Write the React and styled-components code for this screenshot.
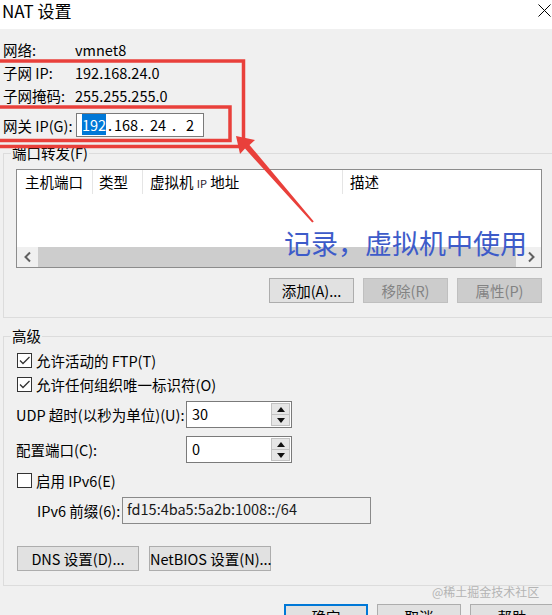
import React from 'react';
import styled, { createGlobalStyle } from 'styled-components';

const GlobalStyle = createGlobalStyle`
  html, body {
    margin: 0;
    padding: 0;
    overflow: hidden;
    background: #f0f0f0;
  }
  body {
    font-family: "Noto Sans CJK SC", "Noto Sans", sans-serif;
    font-size: 14.5px;
    color: #000;
    white-space: nowrap;
  }
`;

const Window = styled.div`
  position: relative;
  width: 552px;
  height: 615px;
  overflow: hidden;
  background: #f0f0f0;
`;

const TitleBar = styled.div`
  display: flex;
  align-items: flex-start;
  height: 29px;
  padding: 2px 1px 0 2px;
  box-sizing: border-box;
  background: #fff;
`;

const Title = styled.div`
  font-size: 17px;
  line-height: 18px;
`;

const CloseIcon = styled.svg`
  margin: 2px 0 0 auto;
`;

const Body = styled.div`
  width: 556px;
  padding: 9px 0 0 3px;
  box-sizing: border-box;
`;

const InfoRow = styled.div`
  display: flex;
  align-items: center;
  height: ${(p) => p.$h || 23}px;
  margin-top: ${(p) => p.$mt || 0}px;
`;

const InfoLabel = styled.div`
  width: 72px;
  flex-shrink: 0;
`;

const IpBox = styled.div`
  display: flex;
  align-items: center;
  width: 128px;
  height: 24px;
  margin-left: 1px;
  padding-left: 4px;
  box-sizing: border-box;
  border: 1px solid #7a7a7a;
  background: #fff;
  line-height: 16px;
`;

const IpField = styled.div`
  width: 26px;
  text-align: center;
`;

const IpText = styled.span`
  background: ${(p) => (p.$selected ? '#0078d7' : 'transparent')};
  color: ${(p) => (p.$selected ? '#fff' : '#000')};
`;

const IpDot = styled.div`
  width: 6px;
  text-align: center;
`;

const Group = styled.fieldset`
  width: 552px;
  min-width: 0;
  margin: ${(p) => p.$mt}px 0 0 0;
  padding: ${(p) => p.$pt}px 12px 14px 12px;
  box-sizing: border-box;
  border: 1px solid #dcdcdc;
`;

const Legend = styled.legend`
  margin-left: -5px;
  padding: 0 1px;
  line-height: 18px;
`;

const ListView = styled.div`
  display: flex;
  flex-direction: column;
  height: 99px;
  box-sizing: border-box;
  border: 1px solid #8c8c8c;
  background: #fff;
`;

const ListHeader = styled.div`
  display: flex;
  height: 24px;
`;

const HeaderCell = styled.div`
  width: ${(p) => (p.$w ? `${p.$w}px` : 'auto')};
  flex: ${(p) => (p.$w ? 'none' : 1)};
  box-sizing: border-box;
  padding-left: ${(p) => p.$pl || 7}px;
  line-height: 24px;
  border-right: ${(p) => (p.$w ? '1px solid #e5e5e5' : 'none')};
`;

const SmallLatin = styled.span`
  font-size: 11px;
  color: #2a1a30;
`;

const ListFill = styled.div`
  flex: 1;
`;

const HScroll = styled.div`
  display: flex;
  height: 20px;
  background: #f0f0f0;
`;

const ScrollArrow = styled.div`
  display: flex;
  align-items: center;
  justify-content: center;
  width: 21px;
`;

const ScrollThumb = styled.div`
  width: 478px;
  background: #cdcdcd;
`;

const ScrollTrack = styled.div`
  flex: 1;
`;

const ButtonRow = styled.div`
  display: flex;
  justify-content: ${(p) => (p.$end ? 'flex-end' : 'flex-start')};
  gap: ${(p) => p.$gap || 9}px;
  margin-top: ${(p) => p.$mt || 0}px;
  padding: 0 ${(p) => p.$pr || 0}px 0 ${(p) => p.$pl || 0}px;
`;

const Button = styled.button`
  width: ${(p) => p.$w}px;
  height: 25px;
  flex-shrink: 0;
  padding: 0;
  font-family: inherit;
  font-size: 14.5px;
  line-height: 18px;
  white-space: nowrap;
  color: #000;
  background: #e1e1e1;
  border: 1px solid ${(p) => (p.$primary ? '#0078d7' : '#adadad')};
  box-shadow: ${(p) => (p.$primary ? 'inset 0 0 0 1px #0078d7' : 'none')};

  &:disabled {
    color: #838383;
    background: #cccccc;
    border-color: #bfbfbf;
  }
`;

const CheckRow = styled.label`
  display: flex;
  align-items: center;
  height: 24px;
  margin-top: ${(p) => p.$mt || 0}px;
  padding-left: 1px;
`;

const CheckBox = styled.span`
  display: flex;
  align-items: center;
  justify-content: center;
  width: 15px;
  height: 15px;
  margin-right: 4px;
  box-sizing: border-box;
  border: 1px solid #333;
  background: #fff;
`;

const SpinRow = styled.div`
  display: flex;
  align-items: center;
  margin-top: ${(p) => p.$mt || 0}px;
`;

const FieldLabel = styled.div`
  width: ${(p) => p.$w}px;
  flex-shrink: 0;
`;

const SpinBox = styled.div`
  display: flex;
  width: 106px;
  height: 27px;
  box-sizing: border-box;
  border: 1px solid #7a7a7a;
  background: #fff;
`;

const SpinValue = styled.div`
  flex: 1;
  padding: 3px 0 0 5px;
  line-height: 18px;
`;

const SpinButtons = styled.div`
  display: flex;
  flex-direction: column;
  width: 19px;
  padding: 1px 1px 1px 0;
`;

const SpinButton = styled.div`
  display: flex;
  flex: 1;
  align-items: center;
  justify-content: center;
  background: #e6e6e6;
  border: 1px solid #c2c2c2;
  & + & {
    border-top: none;
  }
`;

const PrefixRow = styled.div`
  display: flex;
  align-items: center;
  margin-top: 5px;
  padding-left: 21px;
`;

const PrefixInput = styled.div`
  width: 249px;
  height: 27px;
  padding: 2px 0 0 4px;
  box-sizing: border-box;
  border: 1px solid #8a8a8a;
  background: #f0f0f0;
  line-height: 18px;
  color: #1a1a1a;
`;

const Watermark = styled.div`
  position: absolute;
  top: 585px;
  left: 432px;
  font-size: 12px;
  line-height: 14px;
  color: #b4b4b4;
`;

const Annotation = styled.svg`
  position: absolute;
  top: 0;
  left: 0;
  pointer-events: none;
`;

const Note = styled.div`
  position: absolute;
  top: 228px;
  left: 284px;
  font-size: 27px;
  line-height: 30px;
  color: #3d5bc9;
`;

const Chevron = ({ dir }) => (
  <svg width="10" height="12" viewBox="0 0 10 12">
    <path
      d={dir === 'left' ? 'M7 1.5 L2.5 6 L7 10.5' : 'M3 1.5 L7.5 6 L3 10.5'}
      fill="none"
      stroke="#606060"
      strokeWidth="2"
    />
  </svg>
);

const Triangle = ({ up }) => (
  <svg width="8" height="5" viewBox="0 0 8 5">
    <path d={up ? 'M0 5 L4 0 L8 5 Z' : 'M0 0 L8 0 L4 5 Z'} fill="#111" />
  </svg>
);

const Check = ({ checked, children, mt }) => (
  <CheckRow $mt={mt}>
    <CheckBox>
      {checked && (
        <svg width="13" height="13" viewBox="0 0 13 13">
          <path d="M2 6.5 L5 9.5 L11.5 3" fill="none" stroke="#333" strokeWidth="1.3" />
        </svg>
      )}
    </CheckBox>
    {children}
  </CheckRow>
);

const Spin = ({ value }) => (
  <SpinBox>
    <SpinValue>{value}</SpinValue>
    <SpinButtons>
      <SpinButton>
        <Triangle up />
      </SpinButton>
      <SpinButton>
        <Triangle />
      </SpinButton>
    </SpinButtons>
  </SpinBox>
);

export default function App() {
  return (
    <Window>
      <GlobalStyle />
      <TitleBar>
        <Title>NAT 设置</Title>
        <CloseIcon width="13" height="13" viewBox="0 0 13 13">
          <path d="M0.5 0.5 L12.5 12.5 M12.5 0.5 L0.5 12.5" stroke="#000" strokeWidth="1" />
        </CloseIcon>
      </TitleBar>

      <Body>
        <InfoRow>
          <InfoLabel>网络:</InfoLabel>
          <span>vmnet8</span>
        </InfoRow>
        <InfoRow>
          <InfoLabel>子网 IP:</InfoLabel>
          <span>192.168.24.0</span>
        </InfoRow>
        <InfoRow>
          <InfoLabel>子网掩码:</InfoLabel>
          <span>255.255.255.0</span>
        </InfoRow>
        <InfoRow $h={24} $mt={6}>
          <InfoLabel>网关 IP(G):</InfoLabel>
          <IpBox>
            <IpField>
              <IpText $selected>192</IpText>
            </IpField>
            <IpDot>.</IpDot>
            <IpField>
              <IpText>168</IpText>
            </IpField>
            <IpDot>.</IpDot>
            <IpField>
              <IpText>24</IpText>
            </IpField>
            <IpDot>.</IpDot>
            <IpField>
              <IpText>2</IpText>
            </IpField>
          </IpBox>
        </InfoRow>

        <Group $mt={7} $pt={7}>
          <Legend>端口转发(F)</Legend>
          <ListView>
            <ListHeader>
              <HeaderCell $w={76} $pl={8}>主机端口</HeaderCell>
              <HeaderCell $w={50} $pl={6}>类型</HeaderCell>
              <HeaderCell $w={200}>
                虚拟机 <SmallLatin>IP</SmallLatin> 地址
              </HeaderCell>
              <HeaderCell>描述</HeaderCell>
            </ListHeader>
            <ListFill />
            <HScroll>
              <ScrollArrow>
                <Chevron dir="left" />
              </ScrollArrow>
              <ScrollThumb />
              <ScrollTrack />
              <ScrollArrow>
                <Chevron dir="right" />
              </ScrollArrow>
            </HScroll>
          </ListView>
          <ButtonRow $end $mt={10}>
            <Button $w={85}>添加(A)...</Button>
            <Button $w={85} disabled>移除(R)</Button>
            <Button $w={85} disabled>属性(P)</Button>
          </ButtonRow>
        </Group>

        <Group $mt={9} $pt={3}>
          <Legend>高级</Legend>
          <Check checked>允许活动的 FTP(T)</Check>
          <Check checked>允许任何组织唯一标识符(O)</Check>
          <SpinRow $mt={5}>
            <FieldLabel $w={170}>UDP 超时(以秒为单位)(U):</FieldLabel>
            <Spin value="30" />
          </SpinRow>
          <SpinRow $mt={8}>
            <FieldLabel $w={170}>配置端口(C):</FieldLabel>
            <Spin value="0" />
          </SpinRow>
          <Check mt={5}>启用 IPv6(E)</Check>
          <PrefixRow>
            <FieldLabel $w={85}>IPv6 前缀(6):</FieldLabel>
            <PrefixInput>fd15:4ba5:5a2b:1008::/64</PrefixInput>
          </PrefixRow>
          <ButtonRow $gap={10} $mt={22} $pl={1}>
            <Button $w={122}>DNS 设置(D)...</Button>
            <Button $w={122}>NetBIOS 设置(N)...</Button>
          </ButtonRow>
        </Group>

        <ButtonRow $end $mt={18} $pr={2}>
          <Button $w={84} $primary>确定</Button>
          <Button $w={84}>取消</Button>
          <Button $w={84}>帮助</Button>
        </ButtonRow>
      </Body>

      <Watermark>@稀土掘金技术社区</Watermark>

      <Annotation width="552" height="615" viewBox="0 0 552 615">
        <rect x="-10" y="61" width="253.5" height="85.5" fill="none" stroke="#e9403b" strokeWidth="3.5" />
        <rect x="-10" y="107" width="240" height="33.5" fill="none" stroke="#e9403b" strokeWidth="3.5" />
        <polygon
          points="236,136 255,140 249.5,145 313.8,221.4 312.2,222.6 245,148.5 240,154"
          fill="#e9403b"
        />
      </Annotation>
      <Note>记录，虚拟机中使用</Note>
    </Window>
  );
}
